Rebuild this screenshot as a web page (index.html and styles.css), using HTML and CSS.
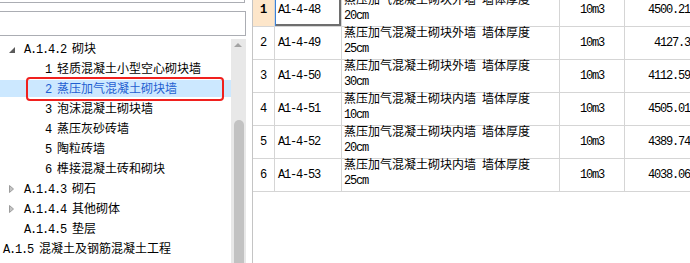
FILE: index.html
```html
<!DOCTYPE html>
<html lang="zh-CN">
<head>
    <meta charset="UTF-8">
    <title>定额库</title>
    <link rel="stylesheet" href="styles.css">
</head>
<body>
<div class="page">
    <!-- 左侧：章节树 -->
    <div class="side">
        <div class="box top"></div>
        <div class="box search"></div>
        <div class="treewrap">
            <div class="tree">
                <div class="node lv1"><i class="tw"><svg width="6" height="6"><polygon points="6,0 6,6 0,6" fill="#5a5a5a"/></svg></i><span class="a">A.1.4.2 </span>砌块</div>
                <div class="node lv2"><span class="a">1 </span>轻质混凝土小型空心砌块墙</div>
                <div class="node lv2 sel"><span class="a">2 </span>蒸压加气混凝土砌块墙</div>
                <div class="node lv2"><span class="a">3 </span>泡沫混凝土砌块墙</div>
                <div class="node lv2"><span class="a">4 </span>蒸压灰砂砖墙</div>
                <div class="node lv2"><span class="a">5 </span>陶粒砖墙</div>
                <div class="node lv2"><span class="a">6 </span>榫接混凝土砖和砌块</div>
                <div class="node lv1"><i class="tw"><svg width="6" height="8"><polygon points="0.5,0.5 4.5,4 0.5,7.5" fill="#c4c4c4" stroke="#9c9c9c"/></svg></i><span class="a">A.1.4.3 </span>砌石</div>
                <div class="node lv1"><i class="tw"><svg width="6" height="8"><polygon points="0.5,0.5 4.5,4 0.5,7.5" fill="#c4c4c4" stroke="#9c9c9c"/></svg></i><span class="a">A.1.4.4 </span>其他砌体</div>
                <div class="node lv1 leaf"><span class="a">A.1.4.5 </span>垫层</div>
                <div class="node lv0"><span class="a">A.1.5 </span>混凝土及钢筋混凝土工程</div>
            </div>
            <div class="vscroll">
                <span class="up"></span>
                <span class="thumb"></span>
            </div>
        </div>
    </div>

    <!-- 右侧：定额列表 -->
    <div class="grid">
        <div class="row cur">
            <div class="c hd">1</div>
            <div class="c code"><span class="a">A1-4-48</span></div>
            <div class="c name">蒸压加气混凝土砌块外墙<span class="a"> </span>墙体厚度<br><span class="a">20cm</span></div>
            <div class="c unit"><span class="a">10m3</span></div>
            <div class="c price"><span class="a">4500.21</span></div>
        </div>
        <div class="row">
            <div class="c hd">2</div>
            <div class="c code"><span class="a">A1-4-49</span></div>
            <div class="c name">蒸压加气混凝土砌块外墙<span class="a"> </span>墙体厚度<br><span class="a">25cm</span></div>
            <div class="c unit"><span class="a">10m3</span></div>
            <div class="c price"><span class="a">4127.3</span></div>
        </div>
        <div class="row">
            <div class="c hd">3</div>
            <div class="c code"><span class="a">A1-4-50</span></div>
            <div class="c name">蒸压加气混凝土砌块外墙<span class="a"> </span>墙体厚度<br><span class="a">30cm</span></div>
            <div class="c unit"><span class="a">10m3</span></div>
            <div class="c price"><span class="a">4112.59</span></div>
        </div>
        <div class="row">
            <div class="c hd">4</div>
            <div class="c code"><span class="a">A1-4-51</span></div>
            <div class="c name">蒸压加气混凝土砌块内墙<span class="a"> </span>墙体厚度<br><span class="a">10cm</span></div>
            <div class="c unit"><span class="a">10m3</span></div>
            <div class="c price"><span class="a">4505.01</span></div>
        </div>
        <div class="row">
            <div class="c hd">5</div>
            <div class="c code"><span class="a">A1-4-52</span></div>
            <div class="c name">蒸压加气混凝土砌块内墙<span class="a"> </span>墙体厚度<br><span class="a">20cm</span></div>
            <div class="c unit"><span class="a">10m3</span></div>
            <div class="c price"><span class="a">4389.74</span></div>
        </div>
        <div class="row">
            <div class="c hd">6</div>
            <div class="c code"><span class="a">A1-4-53</span></div>
            <div class="c name">蒸压加气混凝土砌块内墙<span class="a"> </span>墙体厚度<br><span class="a">25cm</span></div>
            <div class="c unit"><span class="a">10m3</span></div>
            <div class="c price"><span class="a">4038.06</span></div>
        </div>
    </div>
</div>
</body>
</html>
```

FILE: styles.css
```css
html,body{
    margin: 0;
    padding: 0;
    background: #fff;
}
body{
    width: 690px;
    height: 263px;
    overflow: hidden;
    font-family: "Liberation Mono", "Noto Sans CJK SC", monospace;
    font-size: 12px;
    color: #000;
}
/* 半角字符：宋体里是6px宽 */
.a{
    letter-spacing: -1.2px;
}
.page{
    display: flex;
    height: 263px;
}

/* 左侧 */
.side{
    flex: none;
    width: 246px;
    display: flex;
    flex-direction: column;
}
.box{
    box-sizing: border-box;
    margin-left: -1px;
    border: 1px solid #abadb3;
    background: #fff;
}
.box.top{
    width: 246px;
    height: 3px;
    border-top: 0;
}
.box.search{
    width: 247px;
    height: 25px;
    margin-top: 8px;
}
.treewrap{
    flex: 1;
    min-height: 0;
    display: flex;
    margin-top: 3px;
}
.tree{
    flex: 1;
    padding-top: 1px;
}
.node{
    position: relative;
    height: 20px;
    line-height: 20px;
    white-space: nowrap;
}
.lv0{ padding-left: 3px; }
.lv1{ padding-left: 8px; }
.lv1.leaf{ padding-left: 24px; }
.lv2{ padding-left: 45px; }
.tw{
    display: inline-block;
    width: 16px;
}
.tw svg{
    display: inline-block;
    margin-left: 1px;
    vertical-align: 0;
}
.sel{
    color: #1f5fd1;
    background: linear-gradient(#cce8ff, #cce8ff) 0 0 / 100% 17px no-repeat;
}
/* 红色标注框 */
.sel::after{
    content: "";
    position: absolute;
    left: 26px;
    right: 7px;
    top: -3px;
    bottom: -1px;
    border: 2px solid #f0201e;
    border-radius: 4px;
}
.vscroll{
    flex: none;
    width: 15px;
    background: #e8e8e8;
    display: flex;
    flex-direction: column;
}
.up{
    display: block;
    width: 0;
    height: 0;
    margin: 4px 0 0 3px;
    border-left: 4px solid transparent;
    border-right: 4px solid transparent;
    border-bottom: 4px solid #a3a3a3;
}
.thumb{
    display: block;
    flex: 1;
    width: 10px;
    margin: 73px 0 0 3px;
    background: #c2c2c2;
    border-radius: 5px 5px 0 0;
}

/* 右侧表格 */
.grid{
    flex: 1;
    margin-left: 6px;
    border-left: 1px solid #c4c4c4;
    overflow: hidden;
}
.row{
    display: grid;
    grid-template-columns: 22px 67px 218px 65px 68px;
    height: 33px;
    box-sizing: border-box;
    border-bottom: 1px solid #d5d5d5;
}
.row:first-child{
    margin-top: -6px;
}
.c{
    box-sizing: border-box;
    border-right: 1px solid #d5d5d5;
    white-space: nowrap;
}
.hd{
    display: flex;
    align-items: center;
    justify-content: center;
}
.cur .hd{
    background: #fde6ca;
    font-weight: bold;
}
.code{
    display: flex;
    align-items: center;
    padding-left: 3px;
}
.cur .code{
    box-shadow: inset 1px 0 #3b82d8, inset -2px -2px #6e6e6e;
}
.name{
    padding-left: 2px;
    line-height: 15px;
}
.unit{
    display: flex;
    align-items: center;
    justify-content: center;
}
.price{
    display: flex;
    align-items: center;
    justify-content: flex-end;
    padding-right: 3px;
    border-right: 0;
}
```
